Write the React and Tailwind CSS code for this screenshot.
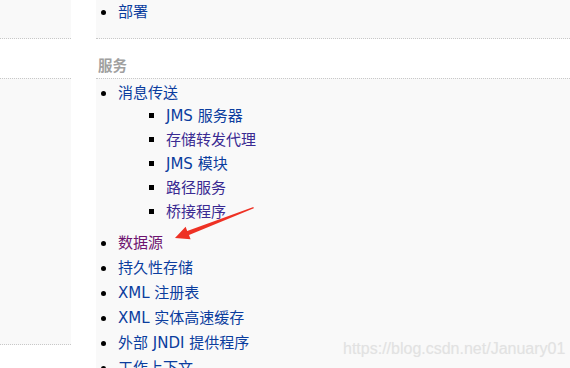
const FONT = { fontFamily: '"DejaVu Sans", "Noto Sans CJK SC", sans-serif' };

const Disc = () => <span className="w-[5px] h-[5px] rounded-full bg-black shrink-0" />;
const Square = () => <span className="w-[5px] h-[5px] bg-black shrink-0" />;

const Item = ({ children, color = 'text-[#0b3d9e]' }) => (
  <li className="flex items-center leading-[25px]">
    <span className="w-[22px] flex pl-[5px]">
      <Disc />
    </span>
    <span className={color}>{children}</span>
  </li>
);

const SubItem = ({ children, color = 'text-[#0b3d9e]' }) => (
  <li className="flex items-center leading-[24px]">
    <span className="w-[17px] flex">
      <Square />
    </span>
    <span className={color}>{children}</span>
  </li>
);

const Arrow = () => (
  <svg className="absolute left-0 top-0 pointer-events-none" width="570" height="368">
    <polygon
      fill="#ee3124"
      points="175,238 185.6,226.8 187.2,230.9 253.4,206.9 253.8,208.3 189,235.1 190.6,239.2"
    />
  </svg>
);

export default function App() {
  return (
    <div className="relative w-[570px] h-[368px] overflow-hidden bg-white text-[15px]" style={FONT}>
      <div className="flex h-full">
        {/* left column */}
        <div className="w-[71px] shrink-0 flex flex-col">
          <div className="h-[39px] shrink-0 bg-[#f9f9f9] border-b border-dotted border-[#c8c8c8]" />
          <div className="h-[39px] shrink-0" />
          <div className="h-[267px] shrink-0 bg-[#f9f9f9] border-t border-b border-dotted border-[#c8c8c8]" />
        </div>

        {/* right column */}
        <div className="ml-[25px] flex-1 flex flex-col">
          <div className="h-[39px] shrink-0 bg-[#f9f9f9] border-b border-dotted border-[#c8c8c8]">
            <ul>
              <li className="flex items-center leading-[24px]">
                <span className="w-[22px] flex pl-[5px]">
                  <Disc />
                </span>
                <span className="text-[#0b3d9e]">部署</span>
              </li>
            </ul>
          </div>
          <div className="h-[39px] shrink-0 pt-[17px] pl-[2px]">
            <h3 className="leading-[20px] font-bold text-[#a0a0a0] text-[14.5px]">服务</h3>
          </div>
          <div className="flex-1 shrink-0 bg-[#f9f9f9] border-t border-dotted border-[#c8c8c8] pt-[1.5px]">
            <ul>
              <Item>消息传送</Item>
              <li className="pl-[53px] -mt-[2px] mb-[7px]">
                <ul>
                  <SubItem>JMS 服务器</SubItem>
                  <SubItem color="text-[#3a2a92]">存储转发代理</SubItem>
                  <SubItem>JMS 模块</SubItem>
                  <SubItem color="text-[#3a2a92]">路径服务</SubItem>
                  <SubItem color="text-[#3a2a92]">桥接程序</SubItem>
                </ul>
              </li>
              <Item color="text-[#6e1470]">数据源</Item>
              <Item>持久性存储</Item>
              <Item>XML 注册表</Item>
              <Item>XML 实体高速缓存</Item>
              <Item>外部 JNDI 提供程序</Item>
              <Item>工作上下文</Item>
            </ul>
          </div>
        </div>
      </div>

      <Arrow />

      <div
        className="absolute left-[343px] top-[339px] text-[16px] leading-[20px] text-[#e2e2e2] pointer-events-none"
        style={{ fontFamily: '"Liberation Sans", Arial, sans-serif', textShadow: '0 0 1px #f0f0f0' }}
      >
        https://blog.csdn.net/January01
      </div>
    </div>
  );
}
